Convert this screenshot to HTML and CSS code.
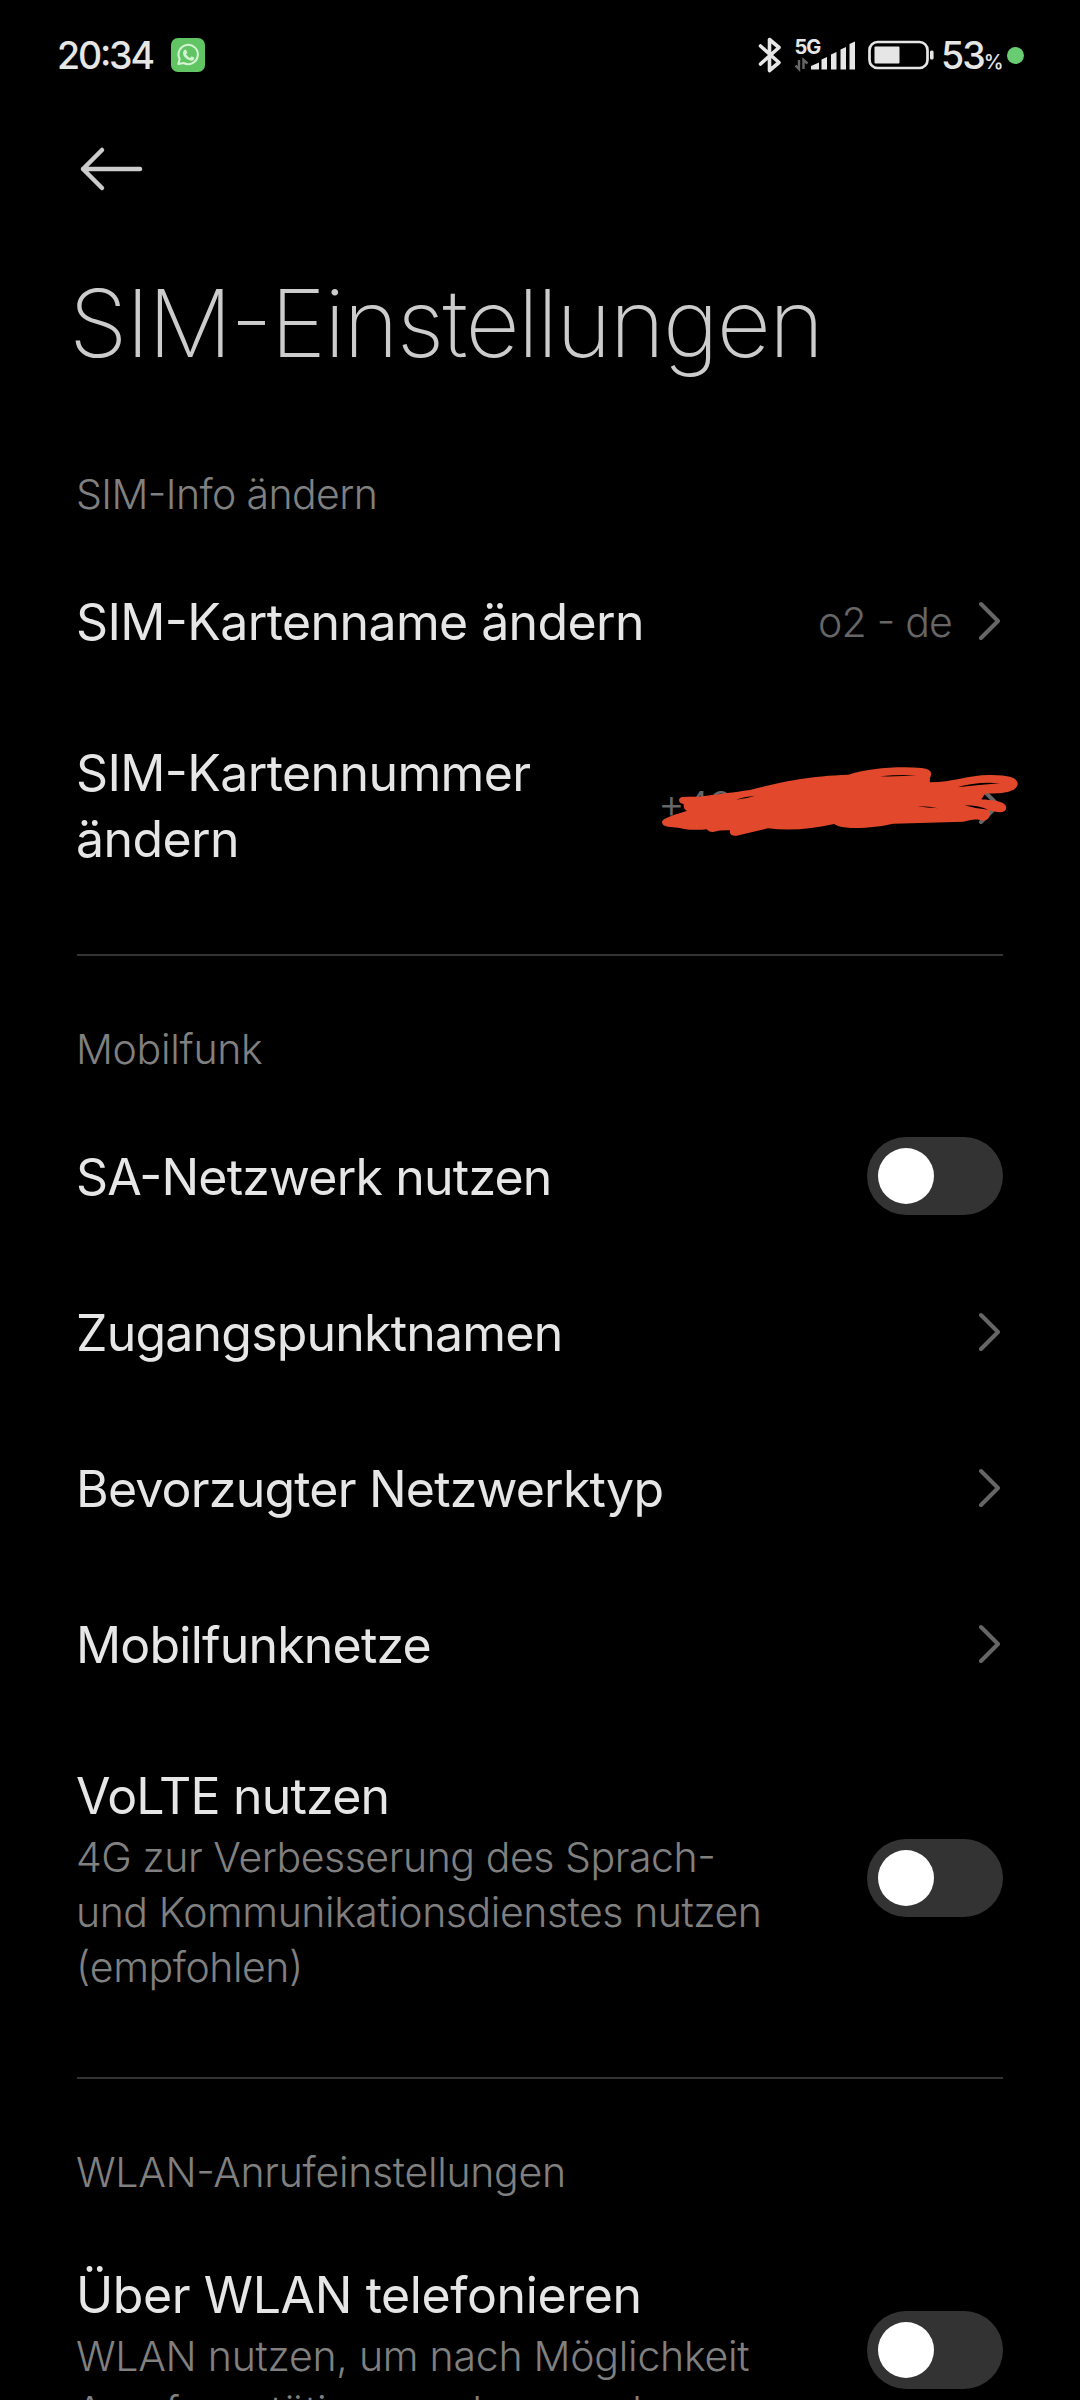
FILE: index.html
```html
<!DOCTYPE html>
<html lang="de">

<head>
    <meta charset="UTF-8">
    <meta name="viewport" content="width=device-width, initial-scale=1.0">
    <title>SIM-Einstellungen</title>
    <link rel="stylesheet" href="styles.css">
</head>

<body>
    <div class="statusbar">
        <span class="clock">20:34</span>
        <svg class="whatsapp" width="34" height="34" viewBox="0 0 102 102">
            <rect width="102" height="102" rx="21" fill="#62c564"/>
            <path d="M22 78 L26 63 A29 29 0 1 1 38 75 Z" fill="none" stroke="#d4f3d4" stroke-width="6" stroke-linejoin="round"/>
            <path d="M41 35 L45 35 L49 44 L45 49 Q50 57 58 60 L62 55 L70 59 Q70 68 60 68 Q48 66 40 56 Q31 43 41 35 Z" fill="#d4f3d4"/>
        </svg>
        <div class="status-right">
            <svg class="bluetooth" width="24" height="38" viewBox="0 0 24 38">
                <path d="M2.500 10 L21 26.500 L11.500 34.500 V3.500 L21 11.500 L2.500 28" fill="none" stroke="#e6e6e6" stroke-width="3.600" stroke-linejoin="round" stroke-linecap="round"/>
            </svg>
            <svg class="signal" width="62" height="44" viewBox="0 -5 62 44">
                <text class="net" x="-0.500" y="15.500">5G</text>
                <path d="M4 22 V31 L0.500 27.500 M8.500 31 V22 L12.500 25.500" fill="none" stroke="#666" stroke-width="2.400"/>
                <path d="M16 31.500 V28 L24 24.500 V31.500 Z M26.500 31.500 V21.500 L32 19 V31.500 Z M36 31.500 V16.500 L41.500 14 V31.500 Z M45.500 31.500 V11.500 L51 9 V31.500 Z M54.500 31.500 V6 L60 3.500 V31.500 Z" fill="#e6e6e6"/>
            </svg>
            <svg class="battery" width="66" height="30" viewBox="0 0 66 30">
                <rect x="1.500" y="2" width="58" height="26" rx="8" fill="none" stroke="#e6e6e6" stroke-width="2.700"/>
                <rect x="6.500" y="6.500" width="25" height="17" rx="1" fill="#e6e6e6"/>
                <rect x="62" y="10.500" width="3.600" height="9" rx="1.500" fill="#e6e6e6"/>
            </svg>
            <span class="percent">53<small>%</small></span>
            <span class="dot"></span>
        </div>
    </div>

    <div class="header">
        <svg class="back" width="64" height="46" viewBox="0 0 64 46">
            <path d="M61 23 H4 M23 4 L4 23 L23 42" fill="none" stroke="#ccc" stroke-width="4.500" stroke-linecap="round" stroke-linejoin="round"/>
        </svg>
        <h1>SIM-Einstellungen</h1>
    </div>

    <div class="group">
        <h2>SIM-Info ändern</h2>
        <div class="item">
            <div class="label sim">SIM-Kartenname ändern</div>
            <div class="value">o2 - de</div>
            <svg class="chevron" width="24" height="40" viewBox="0 0 24 40"><path d="M2 3 L19 20 L2 37"/></svg>
        </div>
        <div class="item">
            <div class="label sim">SIM-Kartennummer ändern</div>
            <div class="value number">+49</div>
            <svg class="chevron" width="24" height="40" viewBox="0 0 24 40"><path d="M2 3 L19 20 L2 37"/></svg>
            <!-- Nummer unkenntlich gemacht -->
            <svg class="scribble" width="400" height="110" viewBox="0 0 1200 330">
                <path fill="#e2492c" fill-rule="evenodd" d="M128 171 C150 169 175 172 200 167 C240 162 280 157 330 150 C400 132 490 108 625 104 C680 86 770 78 845 84 Q880 88 872 108 Q868 116 870 127 C940 127 990 103 1055 105 C1105 106 1134 112 1133 133 C1130 157 1080 163 1036 160 Q1030 170 1024 178 C1055 180 1098 183 1099 203 C1096 222 1070 218 1049 211 Q1055 240 1028 242 C1000 234 990 243 970 245 L760 251 C710 262 635 270 594 258 L582 252 C520 266 450 274 384 265 L290 287 Q267 289 270 271 Q240 270 222 275 Q208 278 200 268 Q160 272 128 266 C105 260 68 266 66 247 C66 234 105 224 142 212 Q130 210 131 192 Q117 190 117 180 Q118 172 128 171 Z M720 109 Q775 103 830 106 Q780 110 720 109 Z M952 142 Q1010 124 1080 130 Q1020 135 952 142 Z M288 179 Q310 170 346 167 Q320 176 288 179 Z M973 196 Q1015 196 1045 209 Q1008 207 973 196 Z M832 199 Q865 198 894 205 Q860 203 832 199 Z"/>
            </svg>
        </div>
    </div>

    <div class="group">
        <h2>Mobilfunk</h2>
        <div class="item">
            <div class="label">SA-Netzwerk nutzen</div>
            <div class="switch"></div>
        </div>
        <div class="item">
            <div class="label">Zugangspunktnamen</div>
            <svg class="chevron" width="24" height="40" viewBox="0 0 24 40"><path d="M2 3 L19 20 L2 37"/></svg>
        </div>
        <div class="item">
            <div class="label">Bevorzugter Netzwerktyp</div>
            <svg class="chevron" width="24" height="40" viewBox="0 0 24 40"><path d="M2 3 L19 20 L2 37"/></svg>
        </div>
        <div class="item">
            <div class="label">Mobilfunknetze</div>
            <svg class="chevron" width="24" height="40" viewBox="0 0 24 40"><path d="M2 3 L19 20 L2 37"/></svg>
        </div>
        <div class="item">
            <div class="label">VoLTE nutzen
                <p>4G zur Verbesserung des Sprach-<br>und Kommunikationsdienstes nutzen<br>(empfohlen)</p>
            </div>
            <div class="switch"></div>
        </div>
    </div>

    <div class="group">
        <h2>WLAN-Anrufeinstellungen</h2>
        <div class="item">
            <div class="label wide">Über WLAN telefonieren
                <p>WLAN nutzen, um nach Möglichkeit<br>Anrufe zu tätigen und anzunehmen</p>
            </div>
            <div class="switch"></div>
        </div>
    </div>
</body>

</html>
```
FILE: styles.css
```css
* {
    box-sizing: border-box;
}

body {
    margin: 0;
    height: 2400px;
    overflow: hidden;
    background-color: #000;
    color: #e6e6e6;
    font-family: Inter, Roboto, sans-serif;
    font-feature-settings: "case";
}

.statusbar {
    display: flex;
    align-items: center;
    height: 110px;
    padding: 0 56px 0 57px;
}

.clock {
    width: 114px;
    font-size: 37.5px;
    font-weight: 500;
    letter-spacing: -2.2px;
}

.status-right {
    display: flex;
    align-items: center;
    margin-left: auto;
}

.signal {
    margin-left: 13px;
}

.net {
    fill: #e6e6e6;
    font-size: 20px;
    font-weight: 700;
    letter-spacing: -1px;
}

.battery {
    margin-left: 11px;
}

.percent {
    width: 66px;
    margin-left: 7px;
    font-size: 37.5px;
    font-weight: 500;
    letter-spacing: -2px;
    white-space: nowrap;
}

.percent small {
    font-size: 20px;
    letter-spacing: 0;
}

.dot {
    width: 17px;
    height: 17px;
    border-radius: 50%;
    background-color: #69cc73;
}

.header {
    height: 292px;
    padding: 36px 72px 0 79px;
}

.back {
    display: block;
}

h1 {
    margin: 71px 0 0 -10px;
    font-size: 94px;
    font-weight: 200;
    line-height: 120px;
    letter-spacing: -1.8px;
    color: #ccc;
}

.group {
    margin: 0 77px;
}

.group + .group {
    margin-top: 43px;
    border-top: 2px solid #333;
}

h2 {
    margin: 0 0 0 -1px;
    padding: 64px 0 21px;
    font-size: 41px;
    font-weight: 300;
    line-height: 56px;
    letter-spacing: -0.6px;
    color: #808080;
}

.group + .group h2 {
    padding: 65px 0 21px;
    letter-spacing: -0.3px;
}

.item {
    position: relative;
    display: flex;
    align-items: center;
    min-height: 156px;
    padding: 41px 0 39px;
}

.label {
    flex: 1;
    margin-left: -1px;
    font-size: 50px;
    line-height: 66px;
    letter-spacing: -0.8px;
}

.label.sim {
    letter-spacing: -0.6px;
}

.label.wide {
    letter-spacing: -0.4px;
}

.label p {
    margin: 1px 0 0;
    font-size: 41px;
    font-weight: 300;
    line-height: 55px;
    letter-spacing: -0.45px;
    color: #808080;
}

.label.wide p {
    letter-spacing: -0.25px;
}

.value {
    margin-right: 27px;
    font-size: 41px;
    font-weight: 300;
    letter-spacing: -0.8px;
    color: #666;
}

.value.number {
    width: 294px;
}

.chevron {
    flex: none;
    margin-bottom: 2px;
}

.chevron path {
    fill: none;
    stroke: #666;
    stroke-width: 4;
    stroke-linecap: round;
    stroke-linejoin: round;
}

/* liegt über Nummer und Pfeil */
.scribble {
    position: absolute;
    top: 41px;
    right: -37px;
}

.switch {
    flex: none;
    width: 136px;
    height: 78px;
    margin: -3px 0 -1px;
    padding: 11px;
    border-radius: 39px;
    background-color: #333;
}

.switch::before {
    content: "";
    display: block;
    width: 56px;
    height: 56px;
    border-radius: 50%;
    background-color: #fff;
}
```
